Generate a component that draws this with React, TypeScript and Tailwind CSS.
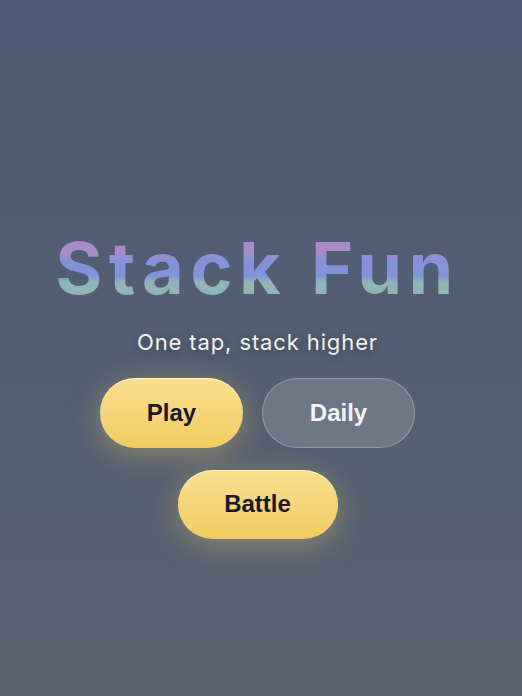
import React from 'react';

const App = () => {
    return (
        <div className="min-h-screen w-full bg-gradient-to-b from-[#4c5b73] to-[#5a6273] flex flex-col items-center justify-center pt-[74px] pr-[7px]">
            <h1
                className="font-bold text-[72px] leading-none tracking-[0.09em] bg-[linear-gradient(180deg,#a98bc7_30%,#8393d9_39%,#8393d9_61%,#8fb6b4_70%)] bg-clip-text text-transparent"
                style={{fontFamily: 'Inter, "Noto Sans", sans-serif'}}
            >
                Stack Fun
            </h1>
            <p
                className="mt-[22px] text-[22px] text-[#f1f1f3] tracking-[0.04em] [text-shadow:0_2px_8px_rgba(0,0,0,0.35)]"
                style={{fontFamily: 'Inter, "Noto Sans", sans-serif'}}
            >
                One tap, stack higher
            </p>
            <div
                className="mt-[19px] flex flex-wrap justify-center gap-x-[19px] gap-y-[22px] max-w-[340px]"
                style={{fontFamily: '"Liberation Sans", Arial, sans-serif'}}
            >
                <button className="h-[70px] w-[143px] rounded-full bg-gradient-to-b from-[#f9df8e] to-[#f1cc5f] text-[#1a1830] text-[24px] font-bold shadow-[0_6px_30px_rgba(245,205,90,0.35),inset_0_1px_0_rgba(255,255,255,0.6)]">
                    Play
                </button>
                <button className="h-[70px] w-[153px] rounded-full bg-white/15 border border-white/25 text-[#f3f3f5] text-[24px] font-bold">
                    Daily
                </button>
                <button className="h-[69px] w-[160px] rounded-full bg-gradient-to-b from-[#f9df8e] to-[#f1cc5f] text-[#1a1830] text-[24px] font-bold shadow-[0_6px_30px_rgba(245,205,90,0.35),inset_0_1px_0_rgba(255,255,255,0.6)]">
                    Battle
                </button>
            </div>
        </div>
    );
};

export default App;
